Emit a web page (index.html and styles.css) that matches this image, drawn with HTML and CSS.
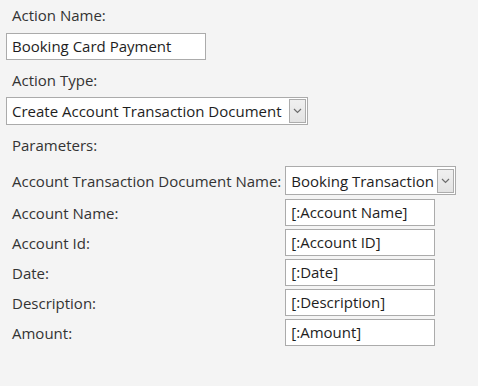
FILE: index.html
```html
<!DOCTYPE html>
<html lang="en">
<head>
    <meta charset="UTF-8">
    <title>Action Settings</title>
    <link rel="stylesheet" href="styles.css">
</head>
<body>
    <div class="form">
        <div class="label">Action Name:</div>
        <div class="textbox wide">Booking Card Payment</div>

        <div class="label">Action Type:</div>
        <div class="combo type">
            <span class="combo-text">Create Account Transaction Document</span>
            <span class="combo-button"><svg width="9" height="6" viewBox="0 0 9 6"><path d="M1 1 L4.5 4.5 L8 1" fill="none" stroke="#6d6d6d" stroke-width="1.2"/></svg></span>
        </div>

        <div class="label">Parameters:</div>

        <div class="params">
            <div class="param-label first">Account Transaction Document Name:</div>
            <div class="combo doc">
                <span class="combo-text">Booking Transaction</span>
                <span class="combo-button"><svg width="9" height="6" viewBox="0 0 9 6"><path d="M1 1 L4.5 4.5 L8 1" fill="none" stroke="#6d6d6d" stroke-width="1.2"/></svg></span>
            </div>

            <div class="param-label">Account Name:</div>
            <div class="textbox param">[:Account Name]</div>

            <div class="param-label">Account Id:</div>
            <div class="textbox param">[:Account ID]</div>

            <div class="param-label">Date:</div>
            <div class="textbox param">[:Date]</div>

            <div class="param-label">Description:</div>
            <div class="textbox param">[:Description]</div>

            <div class="param-label">Amount:</div>
            <div class="textbox param">[:Amount]</div>
        </div>
    </div>
</body>
</html>
```

FILE: styles.css
```css
body {
    margin: 0;
    background: #f4f4f4;
    font-family: "Open Sans", "Noto Sans", sans-serif;
    font-size: 15px;
    color: #333;
}

.form {
    display: flex;
    flex-direction: column;
    align-items: flex-start;
    padding: 0 6px;
}

.label {
    height: 30px;
    line-height: 30px;
    padding-left: 6px;
}

.textbox {
    box-sizing: border-box;
    height: 27px;
    line-height: 25px;
    border: 1px solid #ababab;
    background: #fff;
    padding: 0 5px;
    color: #1e1e1e;
    white-space: nowrap;
}

.textbox.wide {
    width: 200px;
    margin: 3px 0 5px;
}

.combo {
    box-sizing: border-box;
    display: flex;
    align-items: center;
    height: 28px;
    border: 1px solid #ababab;
    background: #fff;
    padding: 0 1px 0 5px;
    color: #1e1e1e;
    white-space: nowrap;
}

.combo.type {
    width: 302px;
    margin: 2px 0 5px;
}

.combo-text {
    flex: 1;
    overflow: hidden;
}

.combo-button {
    box-sizing: border-box;
    width: 17px;
    height: 24px;
    display: flex;
    align-items: center;
    justify-content: center;
    border: 1px solid #acacac;
    background: linear-gradient(#f0f0f0, #e3e3e3);
    margin-left: 3px;
}

.params {
    display: grid;
    grid-template-columns: auto auto;
    column-gap: 4px;
    row-gap: 3px;
    align-items: center;
    margin-top: 6px;
    padding-left: 6px;
}

.param-label {
    white-space: nowrap;
}

.combo.doc {
    width: 171px;
    height: 29px;
    margin-bottom: 1px;
}

.textbox.param {
    width: 150px;
}
```
